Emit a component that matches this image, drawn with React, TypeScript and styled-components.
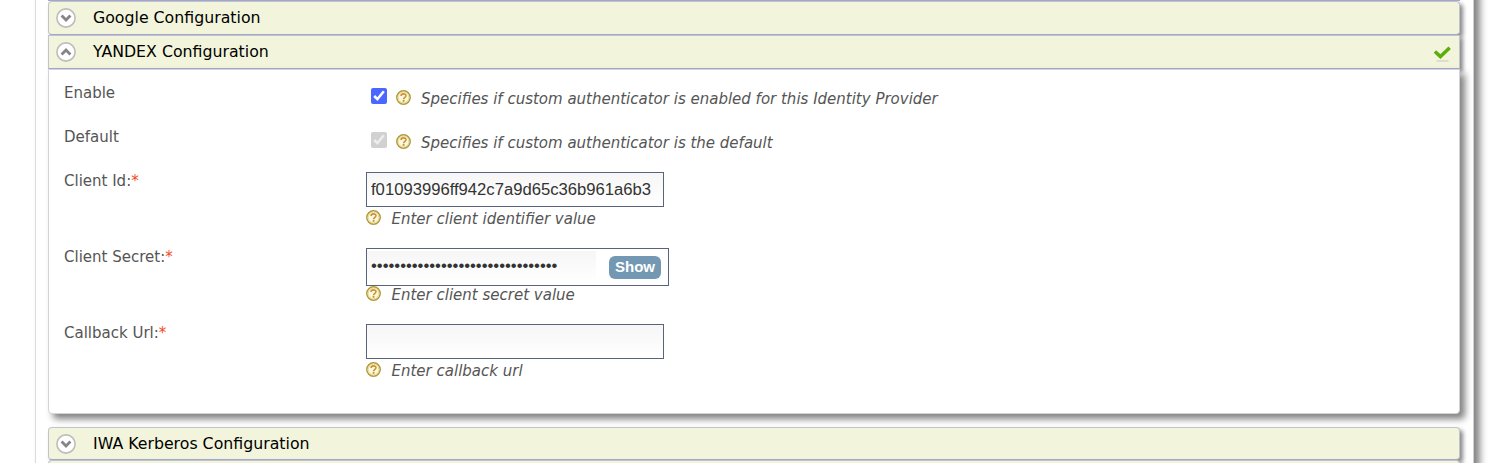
import React from 'react';
import styled, { createGlobalStyle } from 'styled-components';

const Global = createGlobalStyle`
  * { box-sizing: border-box; }
  body { margin: 0; background: #fff; font-family: "DejaVu Sans", Verdana, sans-serif; overflow: hidden; }
`;

const Page = styled.div`
  height: 463px;
  padding: 0 30px 0 35px;
  overflow: hidden;
`;

const Container = styled.div`
  height: 483px;
  margin-top: -20px;
  padding: 20px 13px 0 12px;
  border-left: 1px solid #dcdcdc;
  border-right: 1px solid #cfcfcf;
  box-shadow: 6px 6px 7px #858585;
`;

const Header = styled.div<{ $open?: boolean; $height?: number }>`
  display: flex;
  align-items: center;
  height: ${(p) => p.$height ?? 34}px;
  padding: 0 7px 0 7px;
  background: #f2f5db;
  border: 1px solid #c3c3cb;
  border-bottom-color: #a2a9d0;
  border-radius: ${(p) => (p.$open ? '0' : '4px')};
  box-shadow: 3px 3px 4px #888;
`;

const Previous = styled.div`
  height: 1px;
  background: #a2a9d0;
`;

const Title = styled.h2`
  flex: 1;
  margin: 0 0 0 17px;
  font-size: 15.77px;
  font-weight: 400;
  line-height: 20px;
  color: #000;
`;

const Panel = styled.div`
  height: 345px;
  margin-bottom: 13px;
  padding: 12px 15px;
  background: #fff;
  border: 1px solid #d4d4d8;
  border-radius: 0 0 4px 4px;
  box-shadow: 5px 5px 7px #808080;
`;

const Row = styled.div<{ $height: number }>`
  display: grid;
  grid-template-columns: 302px 1fr;
  height: ${(p) => p.$height}px;
`;

const Label = styled.label`
  font-size: 15px;
  line-height: 22px;
  color: #555;
`;

const Required = styled.span`
  color: #f04a23;
`;

const CheckLine = styled.div`
  display: flex;
  align-items: flex-start;
  padding: 6px 0 0 5px;
`;

const Check = styled.input`
  width: 16px;
  height: 16px;
  margin: 0 9px 0 0;
  accent-color: #4a67ff;
`;

const Hint = styled.div<{ $inline?: boolean }>`
  display: flex;
  align-items: flex-start;
  height: 20px;
  padding-top: ${(p) => (p.$inline ? 2 : 0)}px;
  color: #555;
  font-size: 15px;
  font-style: italic;
  line-height: ${(p) => (p.$inline ? 18 : 18.4)}px;
`;

const HintText = styled.span<{ $inline?: boolean }>`
  margin-left: ${(p) => (p.$inline ? 10 : 10.5)}px;
`;

const TextBox = styled.input`
  display: block;
  width: 298px;
  height: 35px;
  margin: 2px 0 3px;
  padding: 0 4px;
  border: 1px solid #59647c;
  background: linear-gradient(#f6f6f6, #fff);
  color: #333;
  font: 16.65px "Liberation Sans", Arial, sans-serif;
  outline: none;
`;

const SecretBox = styled.div`
  display: flex;
  align-items: center;
  justify-content: space-between;
  width: 303px;
  height: 38px;
  margin-top: 2px;
  padding-right: 7px;
  border: 1px solid #59647c;
`;

const SecretInput = styled.input`
  width: 229px;
  height: 32px;
  padding: 0 4px 3px;
  border: 0;
  background: linear-gradient(#f6f6f6, #fff);
  color: #333;
  font: 16.65px "Liberation Sans", Arial, sans-serif;
  outline: none;
`;

const ShowButton = styled.button`
  width: 52px;
  height: 23px;
  padding: 0;
  border: 0;
  border-radius: 6px;
  background: #7398b3;
  color: #fff;
  font: bold 15px/22px "Liberation Sans", Arial, sans-serif;
`;

const Toggle = ({ up = false }: { up?: boolean }) => (
  <svg width="20" height="20" viewBox="0 0 20 20">
    <circle cx="10" cy="10" r="9.1" fill="#fff" stroke="#bdbdbd" strokeWidth="1.6" />
    <path d={up ? 'M5.6 12.4 10 8l4.4 4.4' : 'M5.6 7.6 10 12l4.4-4.4'} fill="none" stroke="#858585" strokeWidth="2.8" />
  </svg>
);

const HelpIcon = () => (
  <svg width="15" height="15" viewBox="0 0 15 15">
    <circle cx="7.5" cy="7.5" r="6.7" fill="#fcf8dc" stroke="#b09a3c" strokeWidth="1.5" />
    <circle cx="7.5" cy="7.5" r="5.5" fill="none" stroke="#e0d288" strokeWidth="1" />
    <path d="M5.1 5.9C5.1 3.2 10 3.2 10 5.8 10 7.3 7.6 7.4 7.6 9.2" fill="none" stroke="#cc8f38" strokeWidth="1.6" />
    <path d="M6.7 10h1.8v1.8H6.7z" fill="#cc8f38" />
  </svg>
);

const Tick = () => (
  <svg width="19" height="20" viewBox="0 0 19 20">
    <path d="M3.5 19h12" stroke="#c4c7b5" strokeWidth="1" />
    <path d="M1.9 9.4 7.4 14.6 16.7 5.8" fill="none" stroke="#5dad0c" strokeWidth="3.4" />
  </svg>
);

const HelpHint = ({ inline, children }: { inline?: boolean; children: string }) => (
  <Hint $inline={inline}><HelpIcon /><HintText $inline={inline}>{children}</HintText></Hint>
);

const Field = ({ label, children }: { label: string; children: React.ReactNode }) => (
  <Row $height={76}>
    <Label>{label}:<Required>*</Required></Label>
    <div>{children}</div>
  </Row>
);

export default function App() {
  return (
    <>
      <Global />
      <Page>
        <Container>
          <Previous />
          <Header><Toggle /><Title>Google Configuration</Title></Header>
          <Header $open><Toggle up /><Title>YANDEX Configuration</Title><Tick /></Header>
          <Panel>
            <Row $height={44}>
              <Label>Enable</Label>
              <CheckLine>
                <Check type="checkbox" defaultChecked />
                <HelpHint inline>Specifies if custom authenticator is enabled for this Identity Provider</HelpHint>
              </CheckLine>
            </Row>
            <Row $height={44}>
              <Label>Default</Label>
              <CheckLine>
                <Check type="checkbox" defaultChecked disabled />
                <HelpHint inline>Specifies if custom authenticator is the default</HelpHint>
              </CheckLine>
            </Row>
            <Field label="Client Id">
              <TextBox defaultValue="f01093996ff942c7a9d65c36b961a6b3" />
              <HelpHint>Enter client identifier value</HelpHint>
            </Field>
            <Field label="Client Secret">
              <SecretBox>
                <SecretInput type="password" defaultValue="0123456789abcdef0123456789abcdef" />
                <ShowButton>Show</ShowButton>
              </SecretBox>
              <HelpHint>Enter client secret value</HelpHint>
            </Field>
            <Field label="Callback Url">
              <TextBox />
              <HelpHint>Enter callback url</HelpHint>
            </Field>
          </Panel>
          <Header $height={33}><Toggle /><Title>IWA Kerberos Configuration</Title></Header>
          <Header />
        </Container>
      </Page>
    </>
  );
}
